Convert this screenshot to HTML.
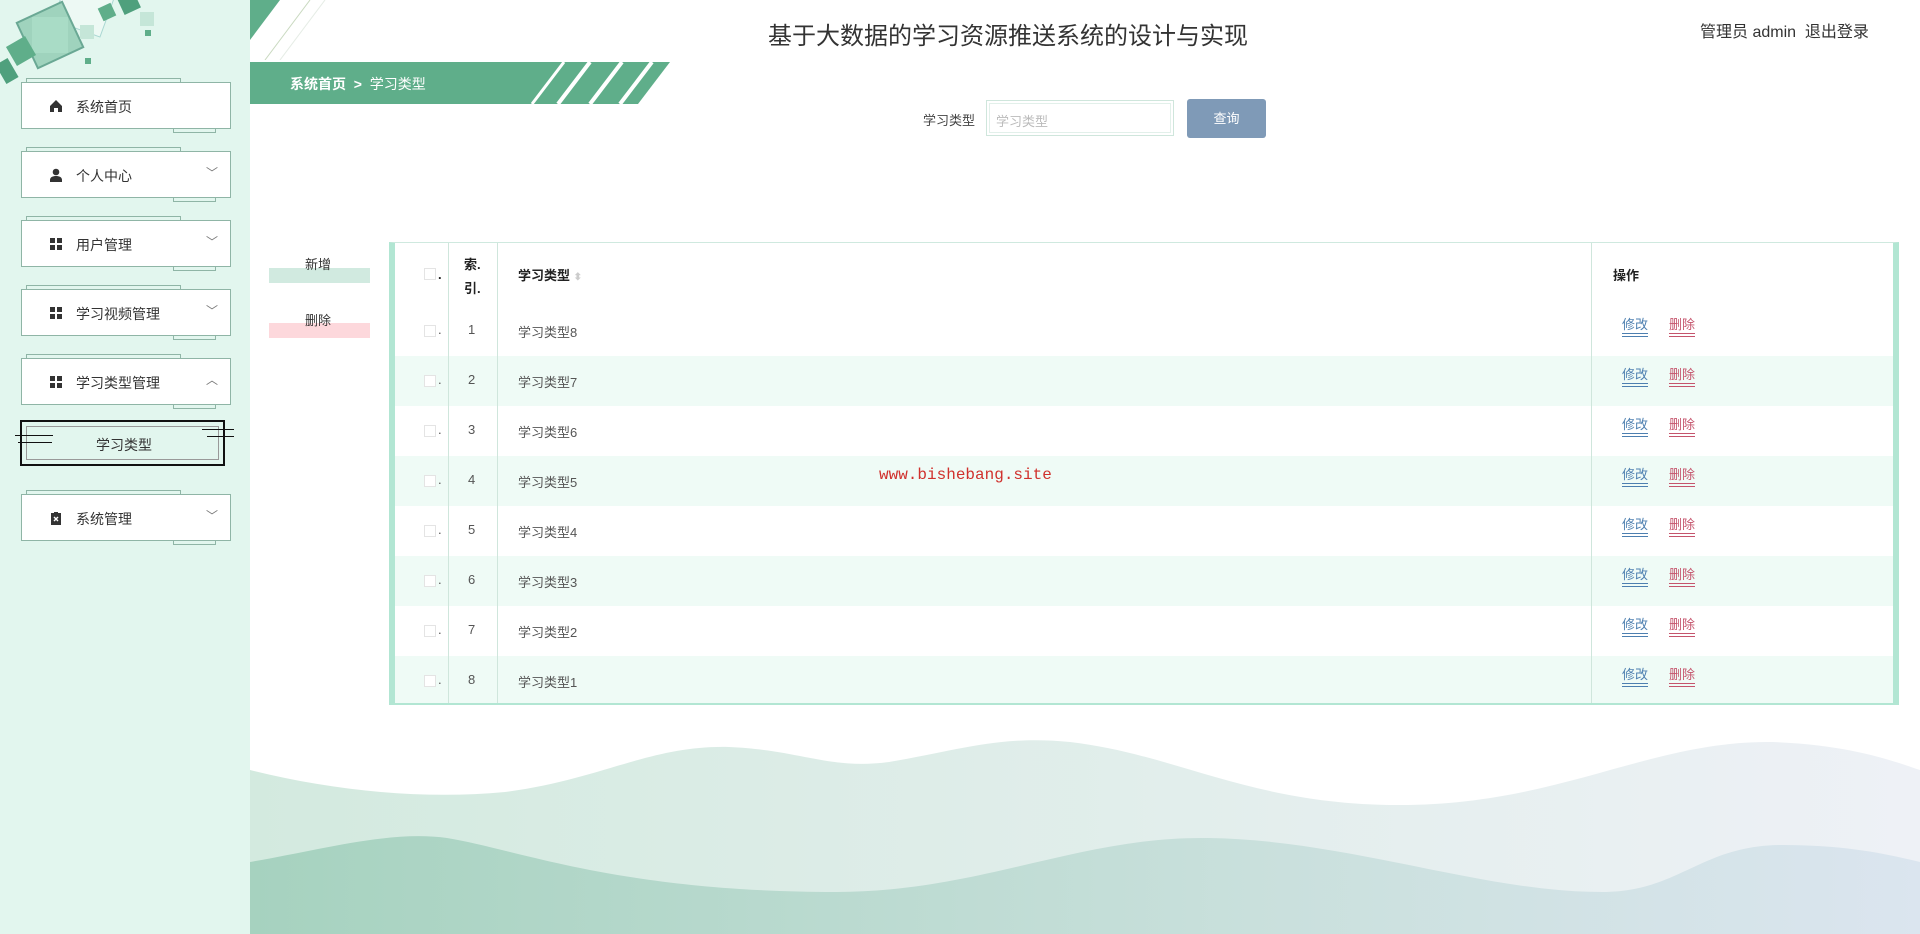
<!DOCTYPE html>
<html><head><meta charset="utf-8"><style>
*{margin:0;padding:0;box-sizing:border-box}
body{width:1920px;height:934px;position:relative;overflow:hidden;background:#fff;font-family:"Liberation Sans","Noto Sans CJK SC",sans-serif;color:#333}
.side{position:absolute;left:0;top:0;width:250px;height:934px;background:#e2f6ee}
.item{position:absolute;left:21px;width:210px;height:47px;background:#fff;border:1px solid #8fb5a6;font-size:14px;color:#333}
.item .tl{position:absolute;left:4px;top:-5px;width:155px;height:5px;border:1px solid #8fb5a6;border-bottom:none}
.item .bt{position:absolute;left:151px;bottom:-5px;width:43px;height:5px;border:1px solid #8fb5a6;border-top:none}
.item .ic{position:absolute;left:27px;top:16px;width:14px;height:14px}
.item .tx{position:absolute;left:54px;top:14px}
.item .ch{position:absolute;left:184px;top:12px;font-size:12px;color:#777}
.abs{position:absolute}
.tbl{position:absolute;left:389px;top:242px;width:1510px;height:463px;border-left:6px solid #b2e6d3;border-right:6px solid #b2e6d3;border-top:1px solid #cfe9df;border-bottom:2px solid #b2e6d3}
.col{position:absolute;top:0;bottom:0;border-left:1px solid #cfe6dc}
.row{position:absolute;left:0;right:0;height:50px;font-size:13px;color:#555}
.row.alt{background:#effbf6}
.cb{position:absolute;width:12px;height:12px;border:1px solid #e4e4e4;background:#fff}
.op{position:absolute;font-size:13px;border-bottom:4px double}
</style></head><body>
<div class="side">
<svg class="abs" style="left:0;top:0" width="250" height="100">
<rect x="60" y="-20" width="50" height="50" fill="#fff" opacity=".4" stroke="#5aa" transform="rotate(20 85 5)"/>
<rect x="25" y="10" width="50" height="50" fill="#9fd3bd" stroke="#6aa894" stroke-width="2" transform="rotate(-25 50 35)"/>
<rect x="32" y="17" width="36" height="36" fill="#a9dcc6"/>
<rect x="10" y="40" width="22" height="22" fill="#5fae8a" transform="rotate(-30 21 51)"/>
<rect x="0" y="60" width="14" height="22" fill="#4fa07d" transform="rotate(-30 7 71)"/>
<rect x="100" y="5" width="14" height="14" fill="#5fae8a" transform="rotate(-25 107 12)"/>
<rect x="120" y="-6" width="18" height="18" fill="#4fa07d" transform="rotate(-25 129 3)"/>
<rect x="140" y="12" width="14" height="14" fill="#c5e6d8"/>
<rect x="80" y="25" width="14" height="14" fill="#c5e6d8"/>
<rect x="145" y="30" width="6" height="6" fill="#5fae8a"/>
<rect x="85" y="58" width="6" height="6" fill="#5fae8a"/>
</svg>
<div class="item" style="top:82px"><div class="tl"></div><div class="bt"></div>
<svg class="ic" viewBox="0 0 14 14"><path d="M7 1L1 7v6h4V9h4v4h4V7z" fill="#333"/></svg><span class="tx">系统首页</span></div>
<div class="item" style="top:151px"><div class="tl"></div><div class="bt"></div>
<svg class="ic" viewBox="0 0 14 14"><circle cx="7" cy="4" r="3.3" fill="#333"/><path d="M1 14v-2c0-3 3-4 6-4s6 1 6 4v2z" fill="#333"/></svg><span class="tx">个人中心</span><span class="ch">﹀</span></div>
<div class="item" style="top:220px"><div class="tl"></div><div class="bt"></div>
<svg class="ic" viewBox="0 0 14 14"><path d="M1 1h5v5H1zM8 1h5v5H8zM1 8h5v5H1zM8 8h5v5H8z" fill="#333"/></svg><span class="tx">用户管理</span><span class="ch">﹀</span></div>
<div class="item" style="top:289px"><div class="tl"></div><div class="bt"></div>
<svg class="ic" viewBox="0 0 14 14"><path d="M1 1h5v5H1zM8 1h5v5H8zM1 8h5v5H1zM8 8h5v5H8z" fill="#333"/></svg><span class="tx">学习视频管理</span><span class="ch">﹀</span></div>
<div class="item" style="top:358px"><div class="tl"></div><div class="bt"></div>
<svg class="ic" viewBox="0 0 14 14"><path d="M1 1h5v5H1zM8 1h5v5H8zM1 8h5v5H1zM8 8h5v5H8z" fill="#333"/></svg><span class="tx">学习类型管理</span><span class="ch">︿</span></div>
<div class="abs" style="left:20px;top:420px;width:205px;height:46px;border:2px solid #111"><div class="abs" style="left:4px;top:4px;right:4px;bottom:4px;border:1px solid #999"></div><span class="abs" style="left:74px;top:13px;font-size:14px">学习类型</span></div>
<div class="abs" style="left:15px;top:435px;width:38px;border-top:1px solid #111"></div>
<div class="abs" style="left:18px;top:442px;width:34px;border-top:1px solid #111"></div>
<div class="abs" style="left:202px;top:429px;width:32px;border-top:1px solid #111"></div>
<div class="abs" style="left:207px;top:436px;width:27px;border-top:1px solid #111"></div>
<div class="item" style="top:494px"><div class="tl"></div><div class="bt"></div>
<svg class="ic" viewBox="0 0 14 14"><path d="M2 2h3V1h4v1h3v12H2z" fill="#333"/><path d="M5 6l4 4M9 6l-4 4" stroke="#fff" stroke-width="1.4"/></svg><span class="tx">系统管理</span><span class="ch">﹀</span></div>
</div>
<svg class="abs" style="left:250px;top:0" width="120" height="60"><path d="M0 0h30L0 40z" fill="#5fae8a"/><path d="M60 0L15 60" stroke="#c9d9c0" stroke-width="1"/><path d="M75 0L30 60" stroke="#e5ece5" stroke-width="1"/></svg>
<div class="abs" style="left:768px;top:16px;font-size:24px;color:#333">基于大数据的学习资源推送系统的设计与实现</div>
<div class="abs" style="left:1700px;top:18px;font-size:16px;color:#333">管理员 admin&nbsp;&nbsp;退出登录</div>
<svg class="abs" style="left:250px;top:62px" width="420" height="42"><path d="M0 0h420l-32 42H0z" fill="#5fae8a"/><path d="M308 42L340 0M340 42L372 0M370 42L402 0" stroke="#fff" stroke-width="4"/><path d="M282 42L314 0" stroke="#fff" stroke-width="3"/></svg>
<div class="abs" style="left:290px;top:74px;font-size:14px;color:#fff;font-weight:bold">系统首页 &nbsp;&gt;&nbsp; <span style="font-weight:normal">学习类型</span></div>
<div class="abs" style="left:923px;top:110px;font-size:13px;color:#444">学习类型</div>
<div class="abs" style="left:986px;top:100px;width:188px;height:36px;border:1px solid #cfe6dc;box-shadow:inset 0 0 0 2px #fff,inset 0 0 0 3px #e2f0ea;font-size:13px;color:#bbb;padding:10px 9px">学习类型</div>
<div class="abs" style="left:1187px;top:99px;width:79px;height:39px;background:#7f9ab7;border-radius:3px;color:#fff;font-size:13px;text-align:center;line-height:39px">查询</div>
<div class="abs" style="left:269px;top:268px;width:101px;height:15px;background:#d1eae0"></div>
<div class="abs" style="left:305px;top:254px;font-size:13px;color:#333">新增</div>
<div class="abs" style="left:269px;top:323px;width:101px;height:15px;background:#fdd8dc"></div>
<div class="abs" style="left:305px;top:310px;font-size:13px;color:#333">删除</div>
<div class="tbl">
<div class="row" style="top:0;height:63px;color:#222;font-weight:bold;font-size:13px"><div class="cb" style="left:29px;top:25px"></div><span class="abs" style="left:43px;top:24px">.</span><span class="abs" style="left:69px;top:10px;line-height:24px">索.<br>引.</span><span class="abs" style="left:123px;top:22px">学习类型 <span style="color:#ccc;font-size:10px">⬍</span></span><span class="abs" style="left:1218px;top:22px">操作</span></div>
<div class="row" style="top:63px"><div class="cb" style="left:29px;top:19px"></div><span class="abs" style="left:43px;top:16px">.</span><span class="abs" style="left:73px;top:16px">1</span><span class="abs" style="left:123px;top:16px">学习类型8</span><span class="op" style="left:1227px;top:8px;color:#4d7fb0">修改</span><span class="op" style="left:1274px;top:8px;color:#c5546c">删除</span></div>
<div class="row alt" style="top:113px"><div class="cb" style="left:29px;top:19px"></div><span class="abs" style="left:43px;top:16px">.</span><span class="abs" style="left:73px;top:16px">2</span><span class="abs" style="left:123px;top:16px">学习类型7</span><span class="op" style="left:1227px;top:8px;color:#4d7fb0">修改</span><span class="op" style="left:1274px;top:8px;color:#c5546c">删除</span></div>
<div class="row" style="top:163px"><div class="cb" style="left:29px;top:19px"></div><span class="abs" style="left:43px;top:16px">.</span><span class="abs" style="left:73px;top:16px">3</span><span class="abs" style="left:123px;top:16px">学习类型6</span><span class="op" style="left:1227px;top:8px;color:#4d7fb0">修改</span><span class="op" style="left:1274px;top:8px;color:#c5546c">删除</span></div>
<div class="row alt" style="top:213px"><div class="cb" style="left:29px;top:19px"></div><span class="abs" style="left:43px;top:16px">.</span><span class="abs" style="left:73px;top:16px">4</span><span class="abs" style="left:123px;top:16px">学习类型5</span><span class="op" style="left:1227px;top:8px;color:#4d7fb0">修改</span><span class="op" style="left:1274px;top:8px;color:#c5546c">删除</span></div>
<div class="row" style="top:263px"><div class="cb" style="left:29px;top:19px"></div><span class="abs" style="left:43px;top:16px">.</span><span class="abs" style="left:73px;top:16px">5</span><span class="abs" style="left:123px;top:16px">学习类型4</span><span class="op" style="left:1227px;top:8px;color:#4d7fb0">修改</span><span class="op" style="left:1274px;top:8px;color:#c5546c">删除</span></div>
<div class="row alt" style="top:313px"><div class="cb" style="left:29px;top:19px"></div><span class="abs" style="left:43px;top:16px">.</span><span class="abs" style="left:73px;top:16px">6</span><span class="abs" style="left:123px;top:16px">学习类型3</span><span class="op" style="left:1227px;top:8px;color:#4d7fb0">修改</span><span class="op" style="left:1274px;top:8px;color:#c5546c">删除</span></div>
<div class="row" style="top:363px"><div class="cb" style="left:29px;top:19px"></div><span class="abs" style="left:43px;top:16px">.</span><span class="abs" style="left:73px;top:16px">7</span><span class="abs" style="left:123px;top:16px">学习类型2</span><span class="op" style="left:1227px;top:8px;color:#4d7fb0">修改</span><span class="op" style="left:1274px;top:8px;color:#c5546c">删除</span></div>
<div class="row alt" style="top:413px;height:47px"><div class="cb" style="left:29px;top:19px"></div><span class="abs" style="left:43px;top:16px">.</span><span class="abs" style="left:73px;top:16px">8</span><span class="abs" style="left:123px;top:16px">学习类型1</span><span class="op" style="left:1227px;top:8px;color:#4d7fb0">修改</span><span class="op" style="left:1274px;top:8px;color:#c5546c">删除</span></div>
<div class="col" style="left:53px"></div><div class="col" style="left:102px"></div><div class="col" style="left:1196px"></div>
</div>
<div class="abs" style="left:879px;top:466px;font-family:'Liberation Mono',monospace;font-size:16px;color:#d0312d">www.bishebang.site</div>
<svg class="abs" style="left:250px;top:700px" width="1670" height="234" viewBox="250 700 1670 234">
<defs><linearGradient id="g1" x1="0" x2="1"><stop offset="0" stop-color="#d3eadf"/><stop offset="1" stop-color="#eef1f6"/></linearGradient>
<linearGradient id="g2" x1="0" x2="1"><stop offset="0" stop-color="#a6d2bf"/><stop offset=".6" stop-color="#c9e0dc"/><stop offset="1" stop-color="#dbe5ef"/></linearGradient></defs>
<path d="M250 770C330 790 420 800 505 792C600 780 650 745 729 747C800 750 830 770 889 762C960 750 1000 735 1070 742C1180 755 1250 805 1400 805C1560 805 1650 740 1773 742C1850 745 1890 760 1920 770V934H250z" fill="url(#g1)"/>
<path d="M250 862C320 850 390 830 447 838C520 850 620 892 836 892C980 892 1080 836 1208 838C1350 840 1480 892 1602 892C1680 892 1700 845 1783 845C1850 845 1890 855 1920 862V934H250z" fill="url(#g2)"/>
</svg>
</body></html>
